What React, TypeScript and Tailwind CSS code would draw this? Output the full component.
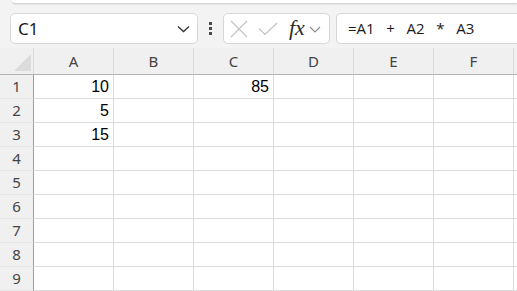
import React from 'react';

const cols = ['A', 'B', 'C', 'D', 'E', 'F', 'G'];
const data: Record<string, string> = { A1: '10', A2: '5', A3: '15', C1: '85' };

export default function App() {
  return (
    <div className="w-[517px] h-[291px] overflow-hidden bg-[#f3f3f3] flex flex-col" style={{ fontFamily: '"Noto Sans", "Open Sans", sans-serif' }}>
      {/* ribbon bottom edge */}
      <div className="h-[3px] ml-[12px] bg-white rounded-bl-[6px] shadow-[0_1px_2px_rgba(0,0,0,0.18)]" />

      {/* formula bar row */}
      <div className="flex items-center h-[31px] mt-[10px] pl-[10px]">
        <div className="w-[188px] h-[31px] bg-white border border-[#d6d6d6] rounded-[5px] flex items-center pl-[7px] pr-[7px] shrink-0">
          <span className="text-[17px] text-[#1a1a1a] flex-1 leading-none">C1</span>
          <svg width="13" height="8" viewBox="0 0 13 8">
            <path d="M1 1.5 L6.5 6.5 L12 1.5" fill="none" stroke="#333" strokeWidth="1.3" />
          </svg>
        </div>
        <div className="w-[25px] flex flex-col items-center gap-[2px] shrink-0">
          <div className="w-[3px] h-[3px] bg-[#4a4a4a]" />
          <div className="w-[3px] h-[3px] bg-[#4a4a4a]" />
          <div className="w-[3px] h-[3px] bg-[#4a4a4a]" />
        </div>
        <div className="w-[107px] h-[31px] bg-white border border-[#d6d6d6] rounded-[5px] flex items-center pl-[6px] shrink-0">
          <svg width="19" height="18" viewBox="0 0 19 18">
            <path d="M1 1 L17 17 M17 1 L1 17" stroke="#c4c4c4" strokeWidth="1.2" fill="none" />
          </svg>
          <svg width="20" height="14" viewBox="0 0 20 14" className="ml-[9px]">
            <path d="M1 6.5 L7 12.5 L19 1" stroke="#c4c4c4" strokeWidth="1.2" fill="none" />
          </svg>
          <span className="ml-[11px] text-[22px] italic text-[#2b2b2b] leading-none mb-[2px]" style={{ fontFamily: '"Liberation Serif", serif' }}>
            fx
          </span>
          <svg width="12" height="7" viewBox="0 0 12 7" className="ml-[4px] mt-[2px]">
            <path d="M1 1 L6 6 L11 1" fill="none" stroke="#8a8a8a" strokeWidth="1.1" />
          </svg>
        </div>
        <div className="ml-[6px] flex-1 h-[31px] bg-white border border-[#d6d6d6] border-r-0 rounded-l-[5px] flex items-center pl-[11px] shrink-0 min-w-[200px]">
          <span className="text-[15px] text-[#1a1a1a] whitespace-pre leading-none" style={{ fontFamily: '"Open Sans", "Noto Sans", sans-serif' }}>
            {'=A1   +   A2   *   A3'}
          </span>
        </div>
      </div>

      {/* grid */}
      <div className="mt-[4px] flex flex-col">
        {/* column headers */}
        <div className="flex h-[27px] border-b border-[#b4b4b4] bg-[#f0f0f0]">
          <div className="w-[34px] shrink-0 border-r border-[#dadada] relative">
            <svg width="17" height="17" viewBox="0 0 17 17" className="absolute left-[14px] top-[6px]">
              <path d="M17 0 L17 17 L0 17 Z" fill="#dcdcdc" />
            </svg>
          </div>
          {cols.map((c) => (
            <div key={c} className="w-[80px] shrink-0 border-r border-[#dadada] flex items-end justify-center pb-[2px] text-[15px] text-[#444]">
              {c === 'G' ? '' : c}
            </div>
          ))}
        </div>
        {/* rows */}
        {[1, 2, 3, 4, 5, 6, 7, 8, 9].map((r) => (
          <div key={r} className="flex h-[24px]">
            <div className="w-[34px] shrink-0 bg-[#f0f0f0] border-r border-[#9e9e9e] border-b border-b-[#e6e6e6] flex items-center justify-center text-[15px] text-[#444]">
              {r}
            </div>
            {cols.map((c) => (
              <div
                key={c}
                className="w-[80px] shrink-0 bg-white border-r border-b border-[#dcdcdc] flex items-center justify-end pr-[4px] text-[16px] text-black"
                style={{ fontFamily: '"Liberation Sans", Arial, sans-serif' }}
              >
                {data[c + r] ?? ''}
              </div>
            ))}
          </div>
        ))}
      </div>
    </div>
  );
}
